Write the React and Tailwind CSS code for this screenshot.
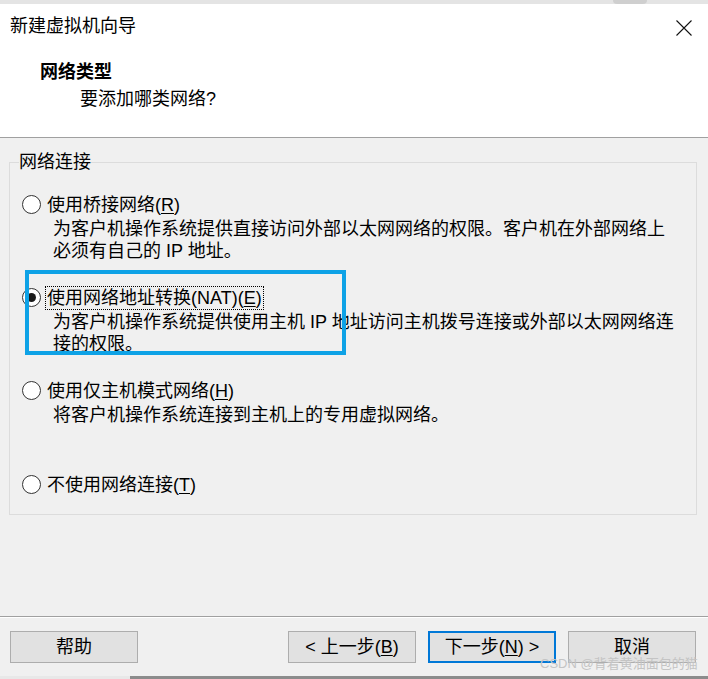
import { useState } from "react";

const options = [
  {
    id: "bridged",
    label: "使用桥接网络",
    key: "R",
    desc: ["为客户机操作系统提供直接访问外部以太网网络的权限。客户机在外部网络上", "必须有自己的 IP 地址。"],
    gap: "mt-[21px]",
  },
  {
    id: "nat",
    label: "使用网络地址转换(NAT)",
    key: "E",
    desc: ["为客户机操作系统提供使用主机 IP 地址访问主机拨号连接或外部以太网网络连", "接的权限。"],
    gap: "mt-[25px]",
  },
  {
    id: "host",
    label: "使用仅主机模式网络",
    key: "H",
    desc: ["将客户机操作系统连接到主机上的专用虚拟网络。"],
    gap: "mt-[25px]",
  },
  {
    id: "none",
    label: "不使用网络连接",
    key: "T",
    desc: [],
    gap: "mt-[48px]",
  },
];

function Radio({ checked }) {
  return (
    <span className="flex h-[19px] w-[19px] shrink-0 items-center justify-center rounded-full border border-[#333333] bg-white">
      {checked && <span className="h-[9px] w-[9px] rounded-full bg-[#1a1a1a]" />}
    </span>
  );
}

function WizardButton({ children, primary }) {
  return (
    <button
      className={
        primary
          ? "flex h-[32px] w-[128px] items-center justify-center border-2 border-[#0078d7] bg-[#e1e1e1] text-[18px] leading-[22px] text-black"
          : "flex h-[32px] w-[128px] items-center justify-center border border-[#adadad] bg-[#e1e1e1] text-[18px] leading-[22px] text-black"
      }
    >
      {children}
    </button>
  );
}

export default function App() {
  const [selected, setSelected] = useState("nat");

  return (
    <div className="relative flex h-[679px] w-[708px] flex-col overflow-hidden bg-[#f0f0f0] font-['Liberation_Sans','Noto_Sans_CJK_SC',sans-serif] text-black">
      {/* strip of the window behind */}
      <div className="h-[4px] bg-[#e4e4e4]">
        <div className="ml-[613px] h-[4px] w-[34px] rounded-b-[4px] bg-[#cfcfcf]" />
      </div>

      <header className="h-[133px] bg-white">
        <div className="flex items-center justify-between pl-[10px] pr-[16px] pt-[11px]">
          <span className="text-[18px] leading-[22px]">新建虚拟机向导</span>
          <svg width="16" height="16" viewBox="0 0 16 16" className="mt-[3px]">
            <path d="M0.5 0.5 L15.5 15.5 M15.5 0.5 L0.5 15.5" stroke="#111" strokeWidth="1.1" fill="none" />
          </svg>
        </div>
        <div className="mt-[24px] pl-[40px] text-[18px] font-bold leading-[22px]">网络类型</div>
        <div className="mt-[5px] pl-[80px] text-[18px] leading-[22px]">要添加哪类网络?</div>
      </header>
      <div className="h-px bg-[#a0a0a0]" />

      <section className="ml-[9px] mr-[11px] mt-[24px] h-[354px] border border-[#dcdcdc]">
        <div className="-mt-[12px] ml-[9px] w-fit bg-[#f0f0f0] text-[18px] leading-[22px]">网络连接</div>

        {options.map((opt) => (
          <div key={opt.id} className={opt.gap} onClick={() => setSelected(opt.id)}>
            <div className="flex items-center pl-[12px]">
              <Radio checked={selected === opt.id} />
              <span
                className={
                  selected === opt.id
                    ? "ml-[5px] inline-block whitespace-nowrap px-[1px] text-[18px] leading-[22px] outline-1 outline-dotted outline-black"
                    : "ml-[5px] inline-block whitespace-nowrap px-[1px] text-[18px] leading-[22px]"
                }
              >
                {opt.label}(<span className="underline underline-offset-2">{opt.key}</span>)
              </span>
            </div>
            {opt.desc.length > 0 && (
              <div className="mt-[2px] pl-[43px] text-[18px] leading-[22px] whitespace-nowrap">
                {opt.desc.map((line) => (
                  <div key={line}>{line}</div>
                ))}
              </div>
            )}
          </div>
        ))}
      </section>

      <div className="mt-[101px] h-px bg-[#a0a0a0]" />
      <div className="h-px bg-white" />

      <footer className="mt-[13px] flex pl-[10px] pr-[12px]">
        <WizardButton>帮助</WizardButton>
        <div className="ml-auto flex gap-[12px]">
          <WizardButton>
            &lt; 上一步(<span className="underline underline-offset-2">B</span>)
          </WizardButton>
          <WizardButton primary>
            下一步(<span className="underline underline-offset-2">N</span>) &gt;
          </WizardButton>
          <WizardButton>取消</WizardButton>
        </div>
      </footer>

      {/* strip of the window below */}
      <div className="mt-[13px] flex h-[3px]">
        <div className="w-[130px] bg-[#e8e8e8]" />
        <div className="flex-1 bg-[#8c8c8c]" />
      </div>

      {/* screenshot annotation */}
      <div className="absolute left-[25px] top-[270px] h-[85px] w-[321px] border-4 border-[#0ea2e6]" />
      <div className="absolute left-[540px] top-[656px] whitespace-nowrap text-[13px] leading-[16px] text-[#c4c4c4]">CSDN @背着黄油面包的猫</div>
    </div>
  );
}
